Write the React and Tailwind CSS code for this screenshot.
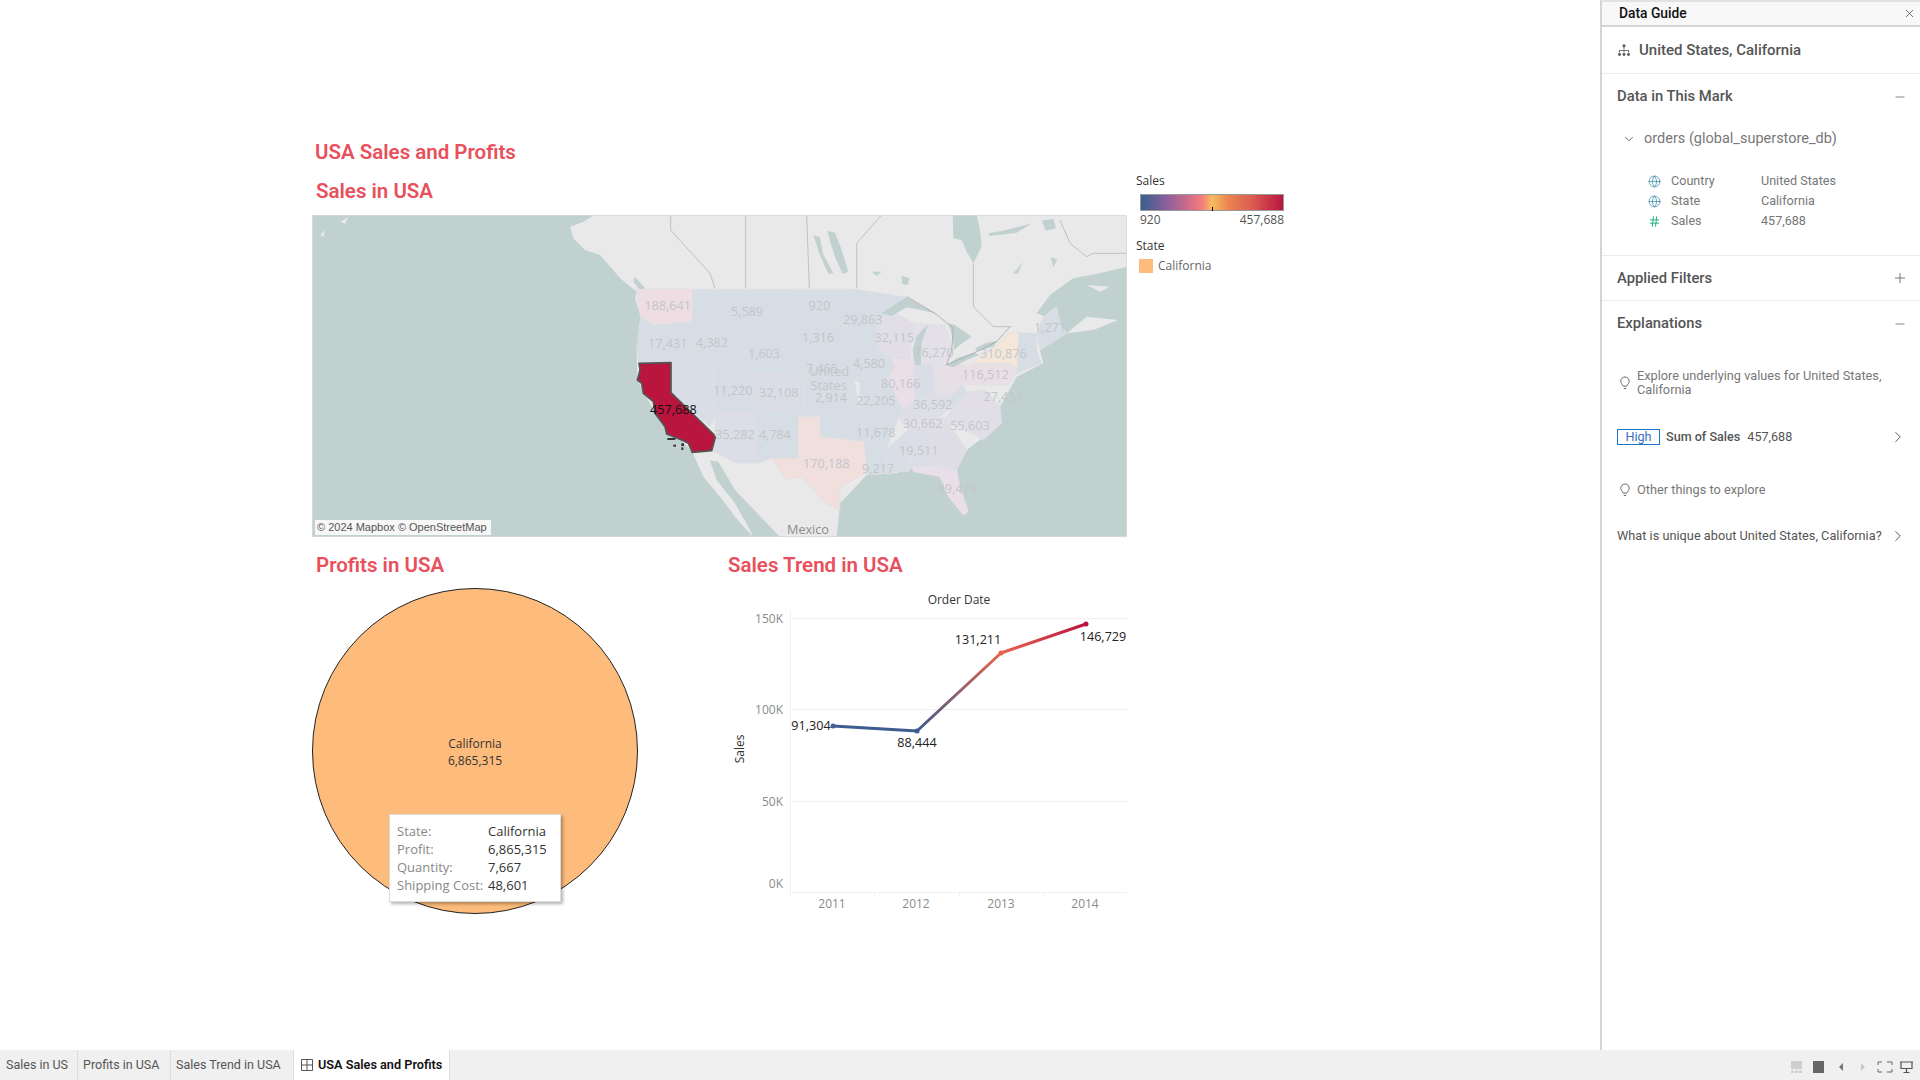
import { ChevronDown, ChevronRight, Globe, Hash, Minus, Plus, X } from 'lucide-react';

const titleClass = "font-['Roboto',sans-serif] text-[20.5px] leading-[26px] font-semibold text-[#e8505b]";

const states = [
  ['#eedde3', '48,238 218,238 218,335 100,345 62,320'],
  ['#d6dde4', '62,320 100,345 218,335 218,458 55,458 50,420'],
  ['#d6dde4', '218,238 245,238 290,370 355,368 355,460 285,460 218,458'],
  ['#d6dde4', '245,238 510,238 510,368 355,368 290,370'],
  ['#d6dde4', '355,368 510,368 510,490 398,490 355,490'],
  ['#d6dde4', '510,238 665,238 680,340 510,338'],
  ['#d6dde4', '510,338 680,340 680,415 690,440 510,430'],
  ['#d6dde4', '510,430 690,440 705,520 555,520 555,490 510,490'],
  ['#dadde5', '398,490 555,490 555,605 398,605'],
  ['#d6dde4', '285,460 355,460 355,490 398,490 398,605 285,605'],
  ['#d9dee6', '155,458 285,458 285,620 270,650 155,548'],
  ['#dcdde6', '285,605 398,605 415,760 350,760 275,722 285,680'],
  ['#d6dde4', '398,605 535,605 535,745 455,745 415,760'],
  ['#d6dde4', '555,520 705,520 720,605 555,605'],
  ['#d6dde4', '535,605 720,605 735,695 600,680 600,620 535,620'],
  ['#f1dfdd', '535,620 600,620 600,680 735,695 738,790 660,830 660,900 615,880 545,800 500,810 455,745 535,745'],
  ['#d6dde4', '665,238 710,238 860,262 770,340 770,415 680,415 680,340'],
  ['#d6dde4', '680,415 810,415 825,470 800,505 700,505'],
  ['#d6dde4', '700,505 800,505 850,600 835,625 720,625 720,520'],
  ['#d6dde4', '720,625 835,625 800,715 735,715'],
  ['#d6dde4', '735,715 800,715 795,760 840,785 740,795'],
  ['#d9dde5', '800,715 865,660 865,785 840,785 795,760'],
  ['#dcdde6', '865,660 925,655 940,770 875,770 865,785'],
  ['#dfdde6', '925,655 985,640 1040,720 1010,780 940,770'],
  ['#eadfe8', '875,770 1010,780 1020,830 1045,905 1030,915 985,860 960,800 880,785'],
  ['#e1dee8', '770,340 820,305 880,340 870,445 810,445 770,415'],
  ['#eadfe6', '810,445 880,445 885,570 850,600 800,505 825,470'],
  ['#e4e0ea', '880,340 975,345 1000,420 980,465 880,465'],
  ['#d9dde5', '880,465 940,465 945,550 885,570'],
  ['#e6dfe6', '940,465 1030,465 1030,525 990,560 945,550'],
  ['#dedee7', '850,600 885,570 945,550 990,560 1000,590 950,625 835,625'],
  ['#d6dde4', '990,560 1030,525 1040,545 1000,590'],
  ['#e2dee8', '1000,590 1040,545 1095,540 1140,590 1140,600 980,620'],
  ['#e2dee8', '835,625 950,625 1140,600 1145,640 1090,690 1040,660 985,640 925,655 865,660'],
  ['#e9dfe5', '1030,465 1170,460 1190,490 1165,525 1035,525'],
  ['#f5e6da', '1055,460 1120,415 1170,368 1197,368 1195,480 1170,460'],
  ['#d6dde4', '1197,368 1250,370 1250,420 1265,460 1190,490'],
  ['#d6dde4', '1250,370 1270,320 1310,290 1320,340 1340,370 1260,420'],
];

const faded = [
  ['188,641', 143, 287], ['5,589', 381, 305], ['920', 598, 287], ['29,863', 728, 328],
  ['17,431', 143, 401], ['4,382', 276, 398], ['1,603', 432, 431], ['1,316', 594, 382],
  ['32,115', 823, 382], ['76,270', 942, 428], ['1,271', 1290, 352], ['310,876', 1150, 431],
  ['7,465', 606, 475], ['United', 628, 485], ['States', 626, 528], ['4,580', 747, 461],
  ['116,512', 1096, 494], ['80,166', 842, 520], ['27,451', 1150, 560], ['11,220', 338, 542],
  ['32,108', 476, 548], ['2,914', 633, 563], ['22,205', 767, 572], ['36,592', 938, 584],
  ['35,282', 345, 674], ['4,784', 465, 674], ['11,678', 767, 668], ['30,662', 908, 641],
  ['55,603', 1050, 647], ['19,511', 896, 722], ['170,188', 619, 761], ['9,217', 774, 776],
  ['89,474', 1012, 835],
];

const lakes = [
  '785,310 830,280 860,262 900,285 950,312 905,300 860,292 815,318',
  '885,465 878,420 890,378 925,342 905,395 902,465',
  '985,340 1005,345 1055,380 1020,405 1002,420 998,385',
  '980,465 1010,445 1062,428 1078,435 1040,450 1000,472',
  '1065,415 1100,398 1130,392 1122,410 1070,422',
  '998,15 1070,15 1080,60 1085,110 1060,160 1040,125 1025,90 1000,85',
  '622,62 645,68 665,120 685,185 668,192 645,140 632,100',
  '580,75 600,82 608,130 640,190 625,192 598,130',
  '1105,70 1150,62 1235,40 1190,68 1110,78',
  '1265,32 1300,26 1308,55 1278,62',
  '1180,190 1210,155 1192,192',
  '845,198 868,205 862,225 846,222',
  '1292,142 1312,148 1300,172',
  '755,185 785,185 770,198',
];

function MapPanel() {
  return (
    <div className="relative h-[322px] w-[815px]">
      <svg viewBox="-924 15 2445 966" className="block h-[322px] w-[815px]">
        <rect x="-924" y="15" width="2445" height="966" fill="#c0d1d0" />
        <polygon
          fill="#e9e9e9"
          points="-78,15 1521,15 1521,170 1440,190 1340,220 1290,260 1250,310 1310,290 1320,340 1340,370 1260,420 1270,460 1190,500 1140,590 1145,640 1040,720 1010,780 1020,830 1045,905 1030,915 985,860 960,800 880,770 830,790 740,795 660,880 650,981 400,981 385,965 345,920 300,860 250,800 217,727 100,600 52,510 50,440 62,320 45,265 50,245 0,205 -25,175 -60,135 -105,120 -140,85 -150,50 -110,35"
        />
        <polygon fill="#c0d1d0" points="270,752 295,755 345,840 480,981 400,981 385,950 345,880 290,810" />
        <polygon fill="#c0d1d0" points="1250,310 1290,255 1360,205 1521,175 1521,260 1490,320 1400,300 1360,320 1300,330" />
        <polygon fill="#e9e9e9" points="1340,370 1400,320 1495,330 1420,360" />
        <polygon fill="#e9e9e9" points="1400,225 1470,230 1440,245" />
        <polygon fill="#e9e9e9" points="-838,35 -815,20 -825,42" />
        <polygon fill="#e9e9e9" points="-899,75 -885,60 -890,80" />
        <polygon fill="#c0d1d0" points="45,200 75,235 60,240 40,215" />
        <g fill="none" stroke="#b8b8b8" strokeWidth="2.5">
          <polyline points="152,15 152,60 270,190 285,235" />
          <line x1="377" y1="15" x2="377" y2="235" />
          <polyline points="560,15 568,235" />
          <polyline points="785,15 710,100 710,235" />
          <polyline points="1060,160 1060,290 1120,350 1175,350" />
          <polyline points="1320,30 1350,100 1400,140 1420,130 1521,130" />
        </g>
        {states.map(([fill, points], i) => (
          <polygon key={i} points={points} fill={fill} stroke="#dedfe2" strokeWidth="2" />
        ))}
        {lakes.map((p, i) => (
          <polygon key={i} points={p} fill="#c0d1d0" />
        ))}
        <polyline points="860,260 945,310 1000,355 995,420 980,465 1060,430 1130,395 1170,350" fill="none" stroke="#a9a9a9" strokeWidth="2.5" />
        <g className="font-['Open_Sans',sans-serif]" fontSize="38" textAnchor="middle" fill="#c3c6c9">
          {faded.map(([t, x, y]) => (
            <text key={t} x={x} y={y + 13}>{t}</text>
          ))}
          <text x="564" y="973" fill="#8c8c8c">Mexico</text>
        </g>
        <polygon
          fill="#b9153e"
          stroke="#555"
          strokeWidth="5"
          strokeLinejoin="round"
          points="57,460 153,458 153,548 280,672 286,682 275,722 217,727 205,700 185,690 140,672 135,650 105,610 100,575 70,550 65,520 52,510 60,480"
        />
        <g fill="#333">
          <rect x="142" y="684" width="24" height="6" />
          <rect x="160" y="704" width="8" height="6" />
          <rect x="184" y="700" width="8" height="8" />
          <rect x="184" y="712" width="6" height="8" />
        </g>
        <text x="160" y="611" fontSize="38" textAnchor="middle" fill="#111" className="font-['Open_Sans',sans-serif]">457,688</text>
        <rect x="-924" y="15" width="2445" height="966" fill="none" stroke="#d8d8d8" strokeWidth="5" />
      </svg>
      <div className="absolute bottom-[2px] left-[3px] flex h-[15px] w-[176px] items-center bg-[#f7f7f7] pl-[2px] font-['Liberation_Sans',sans-serif] text-[11px] text-[#555]">
        © 2024 Mapbox © OpenStreetMap
      </div>
    </div>
  );
}

function TrendChart() {
  return (
    <svg viewBox="710 590 417 330" className="mt-[12px] block h-[330px] w-[417px] font-['Open_Sans',sans-serif]">
      <defs>
        <linearGradient id="seg" gradientUnits="userSpaceOnUse" x1="917" y1="731" x2="1001" y2="653">
          <stop offset="0" stopColor="#3d5c8f" />
          <stop offset="1" stopColor="#e8644c" />
        </linearGradient>
        <linearGradient id="seg2" gradientUnits="userSpaceOnUse" x1="1001" y1="653" x2="1086" y2="624">
          <stop offset="0" stopColor="#e8644c" />
          <stop offset="1" stopColor="#bb1340" />
        </linearGradient>
      </defs>
      <g stroke="#f0f0f0" strokeWidth="1">
        <line x1="790" y1="618.5" x2="1127" y2="618.5" />
        <line x1="790" y1="709.5" x2="1127" y2="709.5" />
        <line x1="790" y1="801.5" x2="1127" y2="801.5" />
        <line x1="790" y1="892.5" x2="1127" y2="892.5" />
        <line x1="790.5" y1="610" x2="790.5" y2="896" />
        <line x1="874.5" y1="892" x2="874.5" y2="896" />
        <line x1="959.5" y1="892" x2="959.5" y2="896" />
        <line x1="1043.5" y1="892" x2="1043.5" y2="896" />
      </g>
      <text x="959" y="604" fontSize="12" textAnchor="middle" fill="#333">Order Date</text>
      <g fontSize="12" textAnchor="end" fill="#8a8a8a">
        <text x="783" y="623">150K</text>
        <text x="783" y="714">100K</text>
        <text x="783" y="806">50K</text>
        <text x="783" y="888">0K</text>
      </g>
      <g fontSize="12" textAnchor="middle" fill="#8a8a8a">
        <text x="832" y="908">2011</text>
        <text x="916" y="908">2012</text>
        <text x="1001" y="908">2013</text>
        <text x="1085" y="908">2014</text>
      </g>
      <text transform="translate(744 749) rotate(-90)" fontSize="12" textAnchor="middle" fill="#333">Sales</text>
      <g fill="none" strokeWidth="3" strokeLinecap="round">
        <line x1="833" y1="726" x2="917" y2="731" stroke="#3d5c8f" />
        <line x1="917" y1="731" x2="1001" y2="653" stroke="url(#seg)" />
        <line x1="1001" y1="653" x2="1086" y2="624" stroke="url(#seg2)" />
      </g>
      <circle cx="833" cy="726" r="2.5" fill="#46608f" />
      <circle cx="917" cy="731" r="2.5" fill="#3d5c8f" />
      <circle cx="1001" cy="653" r="2.5" fill="#e8644c" />
      <circle cx="1086" cy="624" r="2.5" fill="#bb1340" />
      <g fontSize="12.6" textAnchor="middle" fill="#222">
        <text x="811" y="730">91,304</text>
        <text x="917" y="747">88,444</text>
        <text x="978" y="644">131,211</text>
        <text x="1103" y="641">146,729</text>
      </g>
    </svg>
  );
}

function Legend() {
  return (
    <aside className="ml-[9px] w-[160px] pt-[6px] font-['Open_Sans',sans-serif] text-[12px] leading-[16px] text-[#555]">
      <div className="mb-[5px] text-[#333]">Sales</div>
      <div className="relative ml-[4px] h-[17px] w-[144px] border border-[#999] bg-[linear-gradient(90deg,#365f8e_0%,#8c5f9c_18%,#c96a8c_32%,#f47c7c_43%,#f6bc5f_50%,#ea8350_62%,#dc5c52_78%,#b9143f_100%)]">
        <div className="absolute bottom-[-1px] left-[71px] h-[4px] w-px bg-black" />
      </div>
      <div className="ml-[4px] mt-[1px] flex w-[144px] justify-between text-[#555]">
        <span>920</span>
        <span>457,688</span>
      </div>
      <div className="mt-[10px] text-[#333]">State</div>
      <div className="mt-[4px] flex items-center gap-[5px] pl-[3px]">
        <span className="h-[14px] w-[14px] bg-[#fdbc7b]" />
        <span className="text-[#666]">California</span>
      </div>
    </aside>
  );
}

function Bulb() {
  return (
    <svg viewBox="0 0 12 14" className="h-[14px] w-[12px] shrink-0" fill="none" stroke="#666" strokeWidth="1">
      <path d="M6 1a4.2 4.2 0 0 0-4.2 4.2c0 2 1.6 3.1 2.6 5h3.2c1-1.900 2.600-3 2.600-5A4.200 4.200 0 0 0 6 1z" />
      <path d="M4.800 12.500h2.400" />
    </svg>
  );
}

function FieldRow({ icon, name, value }) {
  return (
    <div className="flex h-[20px] items-center text-[12.6px] text-[#777]">
      <span className="flex w-[23px] shrink-0 items-center">{icon}</span>
      <span className="w-[90px]">{name}</span>
      <span>{value}</span>
    </div>
  );
}

function Sidebar() {
  return (
    <aside className="w-[320px] shrink-0 border-l-2 border-t-2 border-l-[#d4d4d4] border-t-[#e2e2e2] font-['Roboto',sans-serif] text-[#555]">
      <div className="flex h-[25px] items-center justify-between border-b-2 border-[#d4d4d4] bg-[#f8f8f8] pl-[17px] pr-[4px]">
        <span className="text-[13.800px] font-medium text-[#111]">Data Guide</span>
        <X size={13} strokeWidth={1.5} className="text-[#555]" />
      </div>
      <div className="flex h-[47px] items-center gap-[9px] border-b border-[#ebebeb] pl-[16px]">
        <svg viewBox="0 0 12 12" className="h-[12px] w-[12px]" fill="#555">
          <circle cx="6" cy="1.800" r="1.500" />
          <circle cx="1.500" cy="10.500" r="1.400" />
          <circle cx="6" cy="10.500" r="1.400" />
          <circle cx="10.500" cy="10.500" r="1.400" />
          <path d="M5.600 3h.8v3h4.500v2.500h-.8V6.800H6.400v1.700h-.8V6.800H1.900v1.700h-.8V6h4.500z" />
        </svg>
        <span className="text-[15px] font-medium">United States, California</span>
      </div>
      <div className="h-[182px] border-b border-[#ebebeb] pl-[15px]">
        <div className="flex h-[45px] items-center justify-between pr-[13px]">
          <span className="text-[14.800px] font-medium">Data in This Mark</span>
          <Minus size={14} strokeWidth={1.2} />
        </div>
        <div className="mt-[8px] flex h-[24px] items-center gap-[8px] pl-[5px]">
          <ChevronDown size={14} strokeWidth={1.5} />
          <span className="text-[14.500px] text-[#777]">orders (global_superstore_db)</span>
        </div>
        <div className="mt-[20px] pl-[31px]">
          <FieldRow icon={<Globe size={13} strokeWidth={1.4} className="text-[#3d8ba5]" />} name="Country" value="United States" />
          <FieldRow icon={<Globe size={13} strokeWidth={1.4} className="text-[#3d8ba5]" />} name="State" value="California" />
          <FieldRow icon={<Hash size={13} strokeWidth={1.6} className="text-[#0ca678]" />} name="Sales" value="457,688" />
        </div>
      </div>
      <div className="flex h-[45px] items-center justify-between border-b border-[#ebebeb] pl-[15px] pr-[12px]">
        <span className="text-[14.800px] font-medium">Applied Filters</span>
        <Plus size={16} strokeWidth={1.2} />
      </div>
      <div className="pl-[15px] pr-[13px]">
        <div className="flex h-[45px] items-center justify-between">
          <span className="text-[14.800px] font-medium">Explanations</span>
          <Minus size={14} strokeWidth={1.2} />
        </div>
        <div className="mt-[23px] flex items-center gap-[5px] pl-[2px] pr-[14px] text-[12.750px] leading-[14px] text-[#777]">
          <Bulb />
          <span className="pl-[1px]">Explore underlying values for United States, California</span>
        </div>
        <div className="mt-[32px] flex h-[16px] items-center text-[12.600px]">
          <span className="flex h-[16px] w-[43px] items-center justify-center border border-[#1b75c8] text-[#3a6fc0]">High</span>
          <span className="ml-[6px] font-medium">Sum of Sales</span>
          <span className="ml-[7px]">457,688</span>
          <ChevronRight size={18} strokeWidth={1.3} className="ml-auto" />
        </div>
        <div className="mt-[38px] flex h-[14px] items-center gap-[5px] pl-[2px] text-[12.750px] text-[#777]">
          <Bulb />
          <span className="pl-[1px]">Other things to explore</span>
        </div>
        <div className="mt-[32px] flex h-[14px] items-center text-[12.750px]">
          <span>What is unique about United States, California?</span>
          <ChevronRight size={18} strokeWidth={1.3} className="ml-auto" />
        </div>
      </div>
    </aside>
  );
}

function TabBar() {
  return (
    <footer className="flex h-[30px] shrink-0 items-stretch bg-[#f0f0f0] font-['Roboto',sans-serif] text-[12.500px] text-[#555]">
      <div className="flex w-[78px] items-center border-r border-[#dcdcdc] pl-[6px]">Sales in US</div>
      <div className="flex w-[93px] items-center border-r border-[#dcdcdc] pl-[5px]">Profits in USA</div>
      <div className="flex w-[123px] items-center border-r border-[#dcdcdc] pl-[5px]">Sales Trend in USA</div>
      <div className="flex w-[156px] items-center gap-[5px] border-r border-[#dcdcdc] bg-white pl-[7px] text-[12.700px] font-semibold text-[#111]">
        <svg viewBox="0 0 12 12" className="h-[12px] w-[12px]" fill="none" stroke="#555" strokeWidth="1">
          <path d="M.500.500h11v11H.500zM6 .500v11M.500 6h11" />
        </svg>
        USA Sales and Profits
      </div>
      <div className="ml-auto flex items-center pr-[6px] pt-[3px]">
        <svg viewBox="0 0 124 12" className="h-[12px] w-[124px]">
          <rect x="1" y="0" width="11" height="8" fill="#cfcfcf" />
          <rect x="1" y="9.500" width="3" height="2.500" fill="#cfcfcf" />
          <rect x="5" y="9.500" width="3" height="2.500" fill="#cfcfcf" />
          <rect x="9" y="9.500" width="3" height="2.500" fill="#cfcfcf" />
          <rect x="23" y="0" width="11" height="12" fill="#666" />
          <polygon points="53,2 53,10 49,6" fill="#777" />
          <polygon points="71,2 71,10 75,6" fill="#c8c8c8" />
          <path d="M88 4V1h4M97 1h5v3M102 8v3h-5M92 11h-4V8" fill="none" stroke="#666" />
          <path d="M110 1h13M111 1.500v6h11v-6M116.500 7.500v4M113.500 11.500h6" fill="none" stroke="#555" strokeWidth="1.200" />
        </svg>
      </div>
    </footer>
  );
}

export default function App() {
  return (
    <div className="flex h-screen flex-col overflow-hidden bg-white">
      <div className="flex min-h-0 flex-1">
        <main className="flex-1 pl-[312px] pt-[139px]">
          <h1 className={`${titleClass} pl-[3px]`}>USA Sales and Profits</h1>
          <div className="flex">
            <div className="w-[815px]">
              <h2 className={`${titleClass} mt-[13px] mb-[11px] pl-[4px]`}>Sales in USA</h2>
              <MapPanel />
              <div className="mt-[15px] flex">
                <div className="w-[398px] shrink-0">
                  <h2 className={`${titleClass} pl-[4px]`}>Profits in USA</h2>
                  <div className="relative mt-[10px] flex h-[326px] w-[326px] flex-col items-center justify-center rounded-full border border-[#222] bg-[#fdbc7b] pt-[2px] font-['Open_Sans',sans-serif] text-[12px] leading-[17px] text-[#333]">
                    <span>California</span>
                    <span>6,865,315</span>
                    <div className="absolute left-[76px] top-[225px] grid h-[88px] w-[172px] grid-cols-[91px_1fr] content-center border border-[#ddd] bg-white pl-[7px] text-[13px] leading-[18px] text-[#333] shadow-[2px_2px_3px_rgba(0,0,0,0.3)]">
                      <span className="text-[#888]">State:</span><span>California</span>
                      <span className="text-[#888]">Profit:</span><span>6,865,315</span>
                      <span className="text-[#888]">Quantity:</span><span>7,667</span>
                      <span className="text-[#888]">Shipping Cost:</span><span>48,601</span>
                    </div>
                  </div>
                </div>
                <div className="w-[417px] shrink-0">
                  <h2 className={`${titleClass} pl-[18px] font-medium`}>Sales Trend in USA</h2>
                  <TrendChart />
                </div>
              </div>
            </div>
            <div className="pt-[2px]">
              <Legend />
            </div>
          </div>
        </main>
        <Sidebar />
      </div>
      <TabBar />
    </div>
  );
}
